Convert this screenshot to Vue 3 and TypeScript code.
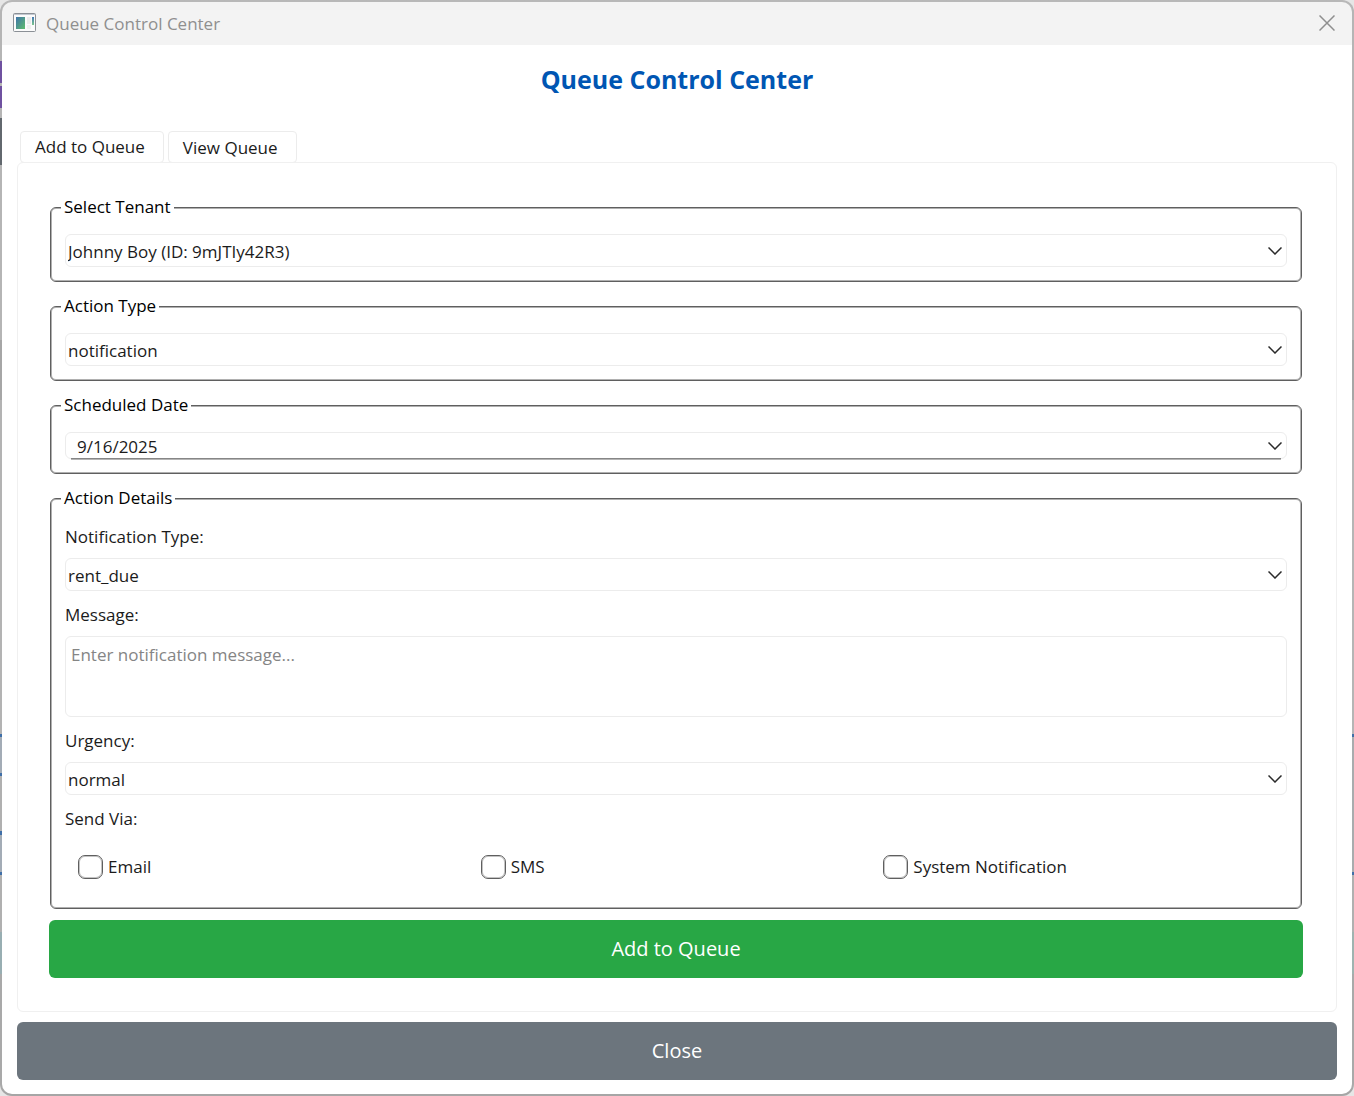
<script setup lang="ts">
import { ref } from 'vue'

type TabId = 'add' | 'view'

const tabs: { id: TabId; label: string }[] = [
  { id: 'add', label: 'Add to Queue' },
  { id: 'view', label: 'View Queue' },
]
const activeTab = ref<TabId>('add')

const tenants = ['Johnny Boy (ID: 9mJTIy42R3)']
const actionTypes = ['notification']
const notificationTypes = ['rent_due']
const urgencies = ['normal']
const channels = ['Email', 'SMS', 'System Notification']

const tenant = ref(tenants[0])
const actionType = ref(actionTypes[0])
const scheduledDate = ref('9/16/2025')
const notificationType = ref(notificationTypes[0])
const message = ref('')
const urgency = ref(urgencies[0])
const sendVia = ref<string[]>([])
</script>

<template>
  <div class="desktop">
    <div class="window">
      <header class="titlebar">
        <svg class="app-icon" viewBox="0 0 23 19" aria-hidden="true">
          <defs>
            <linearGradient id="pane" x1="0" y1="0" x2="1" y2="1">
              <stop offset="0" stop-color="#3f74ab" />
              <stop offset="1" stop-color="#5fbd6c" />
            </linearGradient>
            <linearGradient id="bar" x1="0" y1="0" x2="0" y2="1">
              <stop offset="0" stop-color="#4278b5" />
              <stop offset="1" stop-color="#7cc78c" />
            </linearGradient>
          </defs>
          <rect x="0.5" y="0.5" width="22" height="18" rx="1" fill="#fbfbfb" stroke="#8b9096" />
          <path d="M1 1.5h21" stroke="#c3c8d0" />
          <rect x="3" y="4" width="9" height="12" fill="url(#pane)" />
          <rect x="14" y="4" width="4" height="7" fill="#ececec" />
          <rect x="14" y="12" width="4" height="4" fill="#f0f0f0" />
          <rect x="19" y="4" width="2" height="8" fill="url(#bar)" />
        </svg>
        <span class="caption">Queue Control Center</span>
        <button class="dismiss" type="button" aria-label="Close window">
          <svg viewBox="0 0 32 32" aria-hidden="true">
            <path d="M1 1l30 30M31 1l-30 30" />
          </svg>
        </button>
      </header>

      <main class="body">
        <h1>Queue Control Center</h1>

        <div class="tabs" role="tablist">
          <button
            v-for="tab in tabs"
            :key="tab.id"
            class="tab"
            :class="{ active: tab.id === activeTab }"
            type="button"
            role="tab"
            :aria-selected="tab.id === activeTab"
            @click="activeTab = tab.id"
          >
            {{ tab.label }}
          </button>
        </div>

        <form class="pane" @submit.prevent>
          <div class="groups">
            <fieldset>
              <legend>Select Tenant</legend>
              <div class="combo">
                <select v-model="tenant" aria-label="Select Tenant">
                  <option v-for="t in tenants" :key="t">{{ t }}</option>
                </select>
                <svg class="chevron" viewBox="0 0 28 16" aria-hidden="true"><path d="M1 1l13 13 13-13" /></svg>
              </div>
            </fieldset>

            <fieldset>
              <legend>Action Type</legend>
              <div class="combo">
                <select v-model="actionType" aria-label="Action Type">
                  <option v-for="a in actionTypes" :key="a">{{ a }}</option>
                </select>
                <svg class="chevron" viewBox="0 0 28 16" aria-hidden="true"><path d="M1 1l13 13 13-13" /></svg>
              </div>
            </fieldset>

            <fieldset>
              <legend>Scheduled Date</legend>
              <div class="combo date">
                <input v-model="scheduledDate" type="text" aria-label="Scheduled Date" />
                <svg class="chevron" viewBox="0 0 28 16" aria-hidden="true"><path d="M1 1l13 13 13-13" /></svg>
              </div>
            </fieldset>

            <fieldset>
              <legend>Action Details</legend>
              <div class="details">
                <div class="field">
                  <label for="notification-type">Notification Type:</label>
                  <div class="combo">
                    <select id="notification-type" v-model="notificationType">
                      <option v-for="n in notificationTypes" :key="n">{{ n }}</option>
                    </select>
                    <svg class="chevron" viewBox="0 0 28 16" aria-hidden="true"><path d="M1 1l13 13 13-13" /></svg>
                  </div>
                </div>

                <div class="field">
                  <label for="message">Message:</label>
                  <textarea id="message" v-model="message" placeholder="Enter notification message..."></textarea>
                </div>

                <div class="field">
                  <label for="urgency">Urgency:</label>
                  <div class="combo">
                    <select id="urgency" v-model="urgency">
                      <option v-for="u in urgencies" :key="u">{{ u }}</option>
                    </select>
                    <svg class="chevron" viewBox="0 0 28 16" aria-hidden="true"><path d="M1 1l13 13 13-13" /></svg>
                  </div>
                </div>

                <div role="group" aria-labelledby="send-via">
                  <div id="send-via">Send Via:</div>
                  <div class="channels">
                    <label v-for="c in channels" :key="c" class="check">
                      <input v-model="sendVia" type="checkbox" :value="c" />
                      <span>{{ c }}</span>
                    </label>
                  </div>
                </div>
              </div>
            </fieldset>
          </div>

          <button class="action submit" type="submit">Add to Queue</button>
        </form>

        <button class="action close" type="button">Close</button>
      </main>
    </div>
  </div>
</template>

<style>
body {
  margin: 0;
  background: #e6e6e6;
}
</style>

<style scoped>
.desktop,
.desktop * {
  box-sizing: border-box;
}

.desktop {
  min-height: 100vh;
  display: flex;
  font-family: 'Open Sans', 'Noto Sans', sans-serif;
  font-size: 17px;
  line-height: 24px;
  color: #1b1b1b;
}

.window {
  flex: 1;
  min-width: 0;
  display: flex;
  flex-direction: column;
  padding: 2px;
  border-radius: 12px;
  background:
    linear-gradient(
      #b5b5b5 61px, #6f51a0 61px 83px, #b5b5b5 83px 86px, #6f51a0 86px 108px,
      #b5b5b5 108px 118px, #62686e 118px 165px, #b5b5b5 165px 340px, #a6a6a6 340px 400px,
      #b3b3b3 400px 734px, #3f6fa8 734px 737px, #a3acb6 737px 773px, #3f6fa8 773px 776px,
      #b0b0b0 776px 831px, #3f6fa8 831px 835px, #a3acb6 835px 872px, #3f6fa8 872px 875px,
      #b0b0b0 875px 932px, #98aeb2 932px 974px, #a9a9a9 974px
    ) left / 2px 100% no-repeat,
    linear-gradient(
      #b5b5b5 340px, #a6a6a6 340px 400px, #b5b5b5 400px 734px, #3f6fa8 734px 737px,
      #a9acae 737px 872px, #3f6fa8 872px 875px, #b0b0b0 875px 932px, #9fb3b0 932px 974px,
      #a9a9a9 974px
    ) right / 2px 100% no-repeat,
    linear-gradient(#b8b8b8, #a6a6a6);
}

.titlebar {
  display: flex;
  align-items: center;
  height: 43px;
  padding: 0 17px 0 11px;
  border-radius: 10px 10px 0 0;
  background: #f3f3f3;
  color: #8f8f8f;
}

.app-icon,
.dismiss {
  margin-bottom: 2px;
}

.app-icon {
  width: 23px;
  height: 19px;
  margin-right: 10px;
}

.caption {
  flex: 1;
}

.dismiss {
  display: flex;
  padding: 0;
  border: 0;
  background: none;
}

.dismiss svg {
  width: 16px;
  height: 16px;
  fill: none;
  stroke: #8f8f8f;
  stroke-width: 3;
}

.body {
  flex: 1;
  display: flex;
  flex-direction: column;
  padding: 15px 15px 14px;
  border-radius: 0 0 10px 10px;
  background: #fff;
}

h1 {
  margin: 0 0 32px;
  font-size: 25px;
  line-height: 39px;
  font-weight: 700;
  text-align: center;
  color: #0056b3;
}

.tabs {
  display: flex;
  gap: 4px;
  margin: 0 0 -1px 3px;
}

.tab {
  height: 32px;
  padding: 2px 18px 0 14px;
  border: 1px solid #ececec;
  border-radius: 4px;
  background: #fff;
  font: inherit;
  color: inherit;
}

.tab.active {
  padding-top: 0;
}

.pane {
  flex: 1;
  display: flex;
  flex-direction: column;
  gap: 11px;
  padding: 32px 33px 33px 31px;
  border: 1px solid #f0f0f0;
  border-radius: 6px;
}

.groups {
  display: flex;
  flex-direction: column;
  gap: 12px;
  padding: 0 1px;
}

fieldset {
  min-width: 0;
  margin: 0;
  padding: 15px 14px 14px;
  border: 1px solid #5f5f5f;
  border-radius: 6px;
  box-shadow: inset 0 0 0 1px #b0b0b0;
}

legend {
  margin-left: -4px;
  padding: 0 3px;
  background: #fff;
  color: #000;
}

.combo {
  position: relative;
  display: flex;
  align-items: center;
  height: 33px;
}

select,
.date input,
textarea {
  width: 100%;
  height: 100%;
  margin: 0;
  border: 1px solid #ececec;
  border-radius: 6px;
  outline: 0;
  background: #fff;
  font: inherit;
  color: inherit;
}

select {
  appearance: none;
  padding: 2px 32px 0 2px;
}

.chevron {
  position: absolute;
  right: 5px;
  width: 14px;
  height: 8px;
  fill: none;
  stroke: #2a2a2a;
  stroke-width: 3;
  pointer-events: none;
}

.date {
  height: 27px;
}

.date input {
  padding: 2px 32px 0 11px;
}

.date::after {
  content: '';
  position: absolute;
  left: 6px;
  right: 6px;
  bottom: -1px;
  height: 2px;
  background: linear-gradient(#868686 1px, #b5b5b5 1px);
}

.details {
  display: flex;
  flex-direction: column;
  gap: 12px;
}

.field {
  display: flex;
  flex-direction: column;
  gap: 9px;
}

textarea {
  display: block;
  height: 81px;
  padding: 6px 5px;
  resize: none;
}

textarea::placeholder {
  color: #858585;
  opacity: 1;
}

.channels {
  display: grid;
  grid-template-columns: repeat(3, 1fr);
  gap: 12px;
  padding: 24px 13px 15px;
}

.check {
  display: flex;
  align-items: center;
  gap: 5px;
}

.check input {
  appearance: none;
  width: 25px;
  height: 24px;
  margin: 0;
  border: 1px solid #5f5f5f;
  border-radius: 7px;
  box-shadow: inset 0 0 0 1px #c4c4c4;
  background: #fff;
}

.check input:checked {
  background: #0056b3;
}

.action {
  height: 58px;
  border: 0;
  border-radius: 6px;
  font: inherit;
  font-size: 20px;
  color: #fff;
}

.submit {
  background: #28a745;
}

.close {
  margin-top: 10px;
  background: #6c757d;
}
</style>
